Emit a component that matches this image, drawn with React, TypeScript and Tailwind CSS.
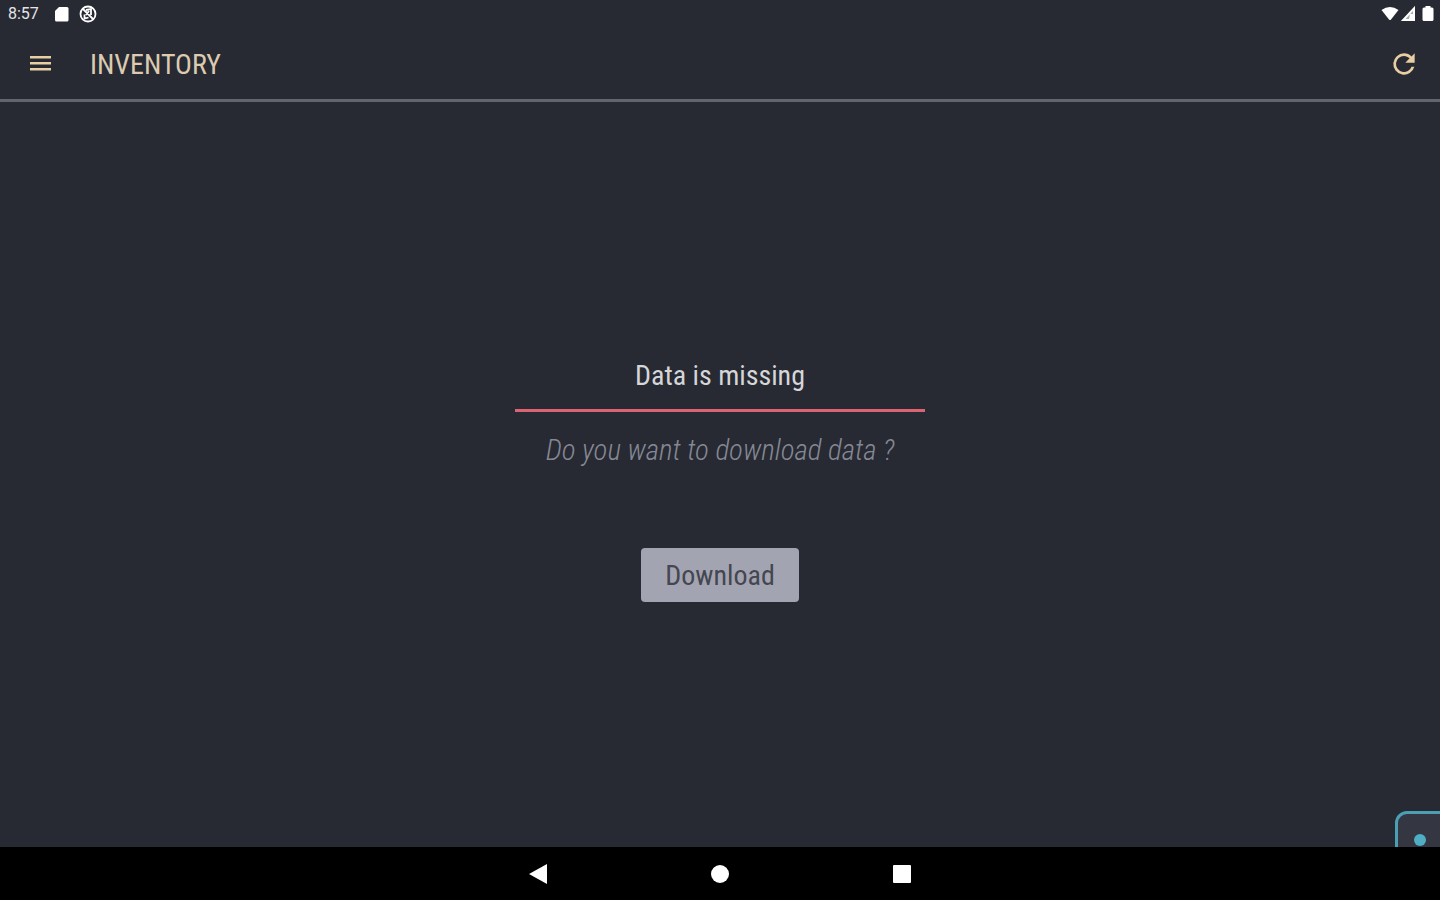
const StatusBar = () => (
  <div className="flex h-7 items-center justify-between pl-2 pr-1 text-white">
    <div className="flex items-center">
      <span className="w-11 font-[Roboto,sans-serif] text-base leading-7 text-[#e4e4e8]">8:57</span>
      {/* SD card */}
      <svg className="h-5 w-5" viewBox="0 0 20 20" fill="currentColor">
        <path d="M7 3H15q1.500 0 1.500 1.500v11.500q0 1.500-1.500 1.500H4.500q-1.500 0-1.500-1.500V7z" />
      </svg>
      {/* Data saver off */}
      <svg className="ml-1.5 h-5 w-5" viewBox="0 0 20 20" fill="none" stroke="currentColor" strokeWidth="1.8">
        <circle cx="10" cy="10" r="7.5" />
        <path d="M5 5l10 10M6.5 10.5v4l4-1M8 6l5-1v6M11 7l-3 4" />
      </svg>
    </div>
    <div className="flex items-center">
      {/* Wifi */}
      <svg className="h-5 w-5" viewBox="0 0 20 20" fill="currentColor">
        <path d="M1.500 6Q10 0 18.500 6L11 15.500q-1 1-2 0z" />
      </svg>
      {/* Signal */}
      <svg className="h-5 w-4" viewBox="0 0 16 20" fill="currentColor">
        <path d="M15 2v15H1z" opacity=".6" />
        <path d="M15 2v15H1zM13 7L5.500 15H9l1-5h3z" fillRule="evenodd" />
      </svg>
      {/* Battery */}
      <svg className="ml-1 h-5 w-4" viewBox="0 0 16 20" fill="currentColor">
        <path d="M5.500 2h5v1.500H12q1.500 0 1.500 1.500v10.500q0 1.500-1.500 1.500H4q-1.500 0-1.500-1.500V5q0-1.500 1.500-1.500h1.500z" />
      </svg>
    </div>
  </div>
);

const Header = () => (
  <header className="flex h-[74px] items-center justify-between border-b-3 border-[#62646e] px-5 text-[#e8cfa3]">
    <div className="flex items-center gap-[30px]">
      <button type="button" aria-label="Menu" className="flex h-10 w-10 items-center justify-center">
        <svg className="h-5 w-6" viewBox="0 0 24 20" fill="currentColor">
          <path d="M2 2h21v2.500H2zM2 8h21v2.500H2zM2 14h21v2.500H2z" />
        </svg>
      </button>
      <h1 className="pt-0.5 text-[28px] leading-9 text-[#dccbb0]">INVENTORY</h1>
    </div>
    <button type="button" aria-label="Refresh" className="flex h-8 w-8 items-center justify-center">
      <svg className="h-8 w-8" viewBox="0 0 24 24" fill="currentColor">
        <path d="M17.650 6.350A7.960 7.960 0 0 0 12 4a8 8 0 1 0 7.730 10h-2.080A6 6 0 1 1 12 6c1.660 0 3.140.69 4.220 1.780L13 11h7V4z" />
      </svg>
    </button>
  </header>
);

const Navigation = () => (
  <nav className="flex h-[53px] items-center justify-center gap-[158px] bg-black text-white">
    <button type="button" aria-label="Back" className="h-6 w-6">
      <svg viewBox="0 0 24 24" fill="currentColor">
        <path d="M21 2v20L3 12z" />
      </svg>
    </button>
    <button type="button" aria-label="Home" className="h-6 w-6">
      <svg viewBox="0 0 24 24" fill="currentColor">
        <circle cx="12" cy="12" r="9" />
      </svg>
    </button>
    <button type="button" aria-label="Recent apps" className="h-6 w-6">
      <svg viewBox="0 0 24 24" fill="currentColor">
        <rect x="3" y="3" width="18" height="18" rx="1" />
      </svg>
    </button>
  </nav>
);

const App = () => {
  return (
    <div className="flex min-h-screen flex-col bg-[#272a33] font-['Roboto_Condensed','Liberation_Sans_Narrow',Roboto,sans-serif]">
      <StatusBar />
      <Header />

      <main className="relative flex flex-1 flex-col items-center justify-center overflow-hidden">
        <h2 className="w-[410px] border-b-3 border-[#dc6472] pb-1 text-center text-[28px] leading-[58px] text-[#d6d6d8]">
          Data is missing
        </h2>
        <p className="mt-5 text-[29px] font-light italic leading-9 text-[#858894]">Do you want to download data ?</p>
        <button
          type="button"
          className="mt-20 h-[54px] rounded-sm bg-[#a3a4b1] px-6 pt-0.5 text-[28px] text-[#444650]"
        >
          Download
        </button>

        {/* Floating panel, mostly off screen */}
        <div className="absolute -bottom-8 -right-8 h-[68px] w-[77px] rounded-xl border-3 border-[#4a9fb5] bg-[#343642]">
          <div className="ml-4 mt-5 h-3 w-3 rounded-full bg-[#4fadc4]" />
        </div>
      </main>

      <Navigation />
    </div>
  );
};

export default App;
